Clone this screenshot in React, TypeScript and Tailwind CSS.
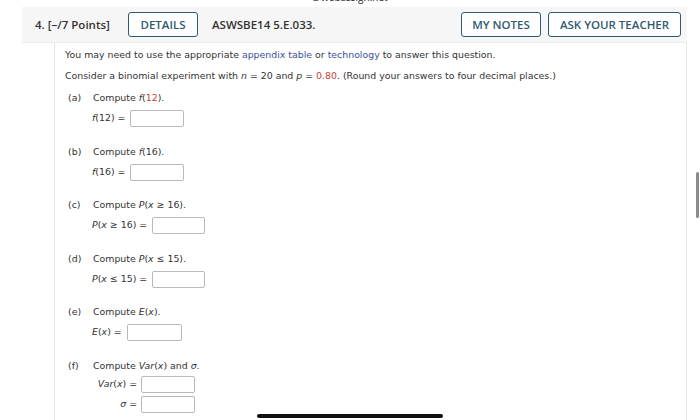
import React from 'react';

const body = { fontFamily: '"DejaVu Sans", Verdana, sans-serif' };
const head = { fontFamily: '"Open Sans", "Liberation Sans", sans-serif' };

function Box({ w = 'w-[54px]' }: { w?: string }) {
  return <div className={`${w} h-[17px] border border-[#b9b9b9] rounded-[2px] bg-white`} />;
}

function Part({ tag, children, answer }: { tag: string; children: React.ReactNode; answer: React.ReactNode }) {
  return (
    <div>
      <div className="flex h-[12px] items-center leading-[12px]">
        <span className="w-[28px] pl-[3px]">({tag})</span>
        <span>{children}</span>
      </div>
      <div className="mt-[6px] flex items-center pl-[27px]">{answer}</div>
    </div>
  );
}

export default function App() {
  const btn =
    'h-[25px] flex items-center justify-center border border-[#2f5a73] rounded-[3px] text-[11.5px] font-semibold text-[#2f5a73] bg-white';

  return (
    <div className="relative w-[700px] h-[420px] overflow-hidden bg-white text-[#333]">
      {/* clipped site label */}
      <div className="h-[7px] overflow-hidden flex justify-center">
        <div className="mt-[-8px] text-[10px] leading-[11px] text-[#222]" style={head}>
          ■ webassign.net
        </div>
      </div>

      <div className="ml-[22px] w-[665px]">
        {/* header bar */}
        <div className="h-[36px] bg-[#f6f6f6] flex items-center pl-[13px] pr-[6px] border-b border-[#ececec]" style={head}>
          <div className="w-[93px] shrink-0 text-[11.5px] font-semibold text-[#333]">4. [–/7 Points]</div>
          <div className={`${btn} w-[70px]`}>DETAILS</div>
          <div className="ml-[14px] text-[11.5px] font-semibold text-[#333]">ASWSBE14 5.E.033.</div>
          <div className="ml-auto flex gap-[7px]">
            <div className={`${btn} w-[80px]`}>MY NOTES</div>
            <div className={`${btn} w-[133px]`}>ASK YOUR TEACHER</div>
          </div>
        </div>

        {/* body */}
        <div
          className="ml-[32px] h-[400px] border-l border-r border-[#e6e6e6] pl-[10px] pt-[6px] text-[9.4px] text-[#333]"
          style={body}
        >
          <p className="leading-[12px]">
            You may need to use the appropriate <span className="text-[#3a4f9e]">appendix table</span> or{' '}
            <span className="text-[#3a4f9e]">technology</span> to answer this question.
          </p>
          <p className="mt-[9px] leading-[12px]">
            Consider a binomial experiment with <i>n</i> = 20 and <i>p</i> ={' '}
            <span className="text-[#c8423a]">0.80</span>. (Round your answers to four decimal places.)
          </p>

          <div className="mt-[10px] flex flex-col gap-[18.5px]">
            <Part
              tag="a"
              answer={
                <>
                  <span className="mr-[5px]"><i>f</i>(12) =</span>
                  <Box />
                </>
              }
            >
              Compute <i>f</i>(<span className="text-[#c8423a]">12</span>).
            </Part>
            <Part
              tag="b"
              answer={
                <>
                  <span className="mr-[5px]"><i>f</i>(16) =</span>
                  <Box />
                </>
              }
            >
              Compute <i>f</i>(16).
            </Part>
            <Part
              tag="c"
              answer={
                <>
                  <span className="mr-[5px]"><i>P</i>(<i>x</i> ≥ 16) =</span>
                  <Box w="w-[53px]" />
                </>
              }
            >
              Compute <i>P</i>(<i>x</i> ≥ 16).
            </Part>
            <Part
              tag="d"
              answer={
                <>
                  <span className="mr-[5px]"><i>P</i>(<i>x</i> ≤ 15) =</span>
                  <Box w="w-[53px]" />
                </>
              }
            >
              Compute <i>P</i>(<i>x</i> ≤ 15).
            </Part>
            <Part
              tag="e"
              answer={
                <>
                  <span className="mr-[5px]"><i>E</i>(<i>x</i>) =</span>
                  <Box w="w-[55px]" />
                </>
              }
            >
              Compute <i>E</i>(<i>x</i>).
            </Part>

            <div>
              <div className="flex h-[12px] items-center leading-[12px]">
                <span className="w-[28px] pl-[3px]">(f)</span>
                <span>
                  Compute <i>Var</i>(<i>x</i>) and <i>σ</i>.
                </span>
              </div>
              <div className="mt-[4px] pl-[26px] flex flex-col gap-[3px]">
                <div className="flex items-center">
                  <span className="w-[50px] text-right pr-[4px]"><i>Var</i>(<i>x</i>) =</span>
                  <Box />
                </div>
                <div className="flex items-center">
                  <span className="w-[50px] text-right pr-[4px]"><i>σ</i> =</span>
                  <Box />
                </div>
              </div>
            </div>
          </div>
        </div>
      </div>

      {/* scrollbar */}
      <div className="absolute left-[696px] top-[172px] w-[3px] h-[46px] rounded-full bg-[#8a8a8a]" />
      {/* home indicator */}
      <div className="absolute left-[257px] top-[414px] w-[186px] h-[4px] rounded-full bg-[#111]" />
    </div>
  );
}
